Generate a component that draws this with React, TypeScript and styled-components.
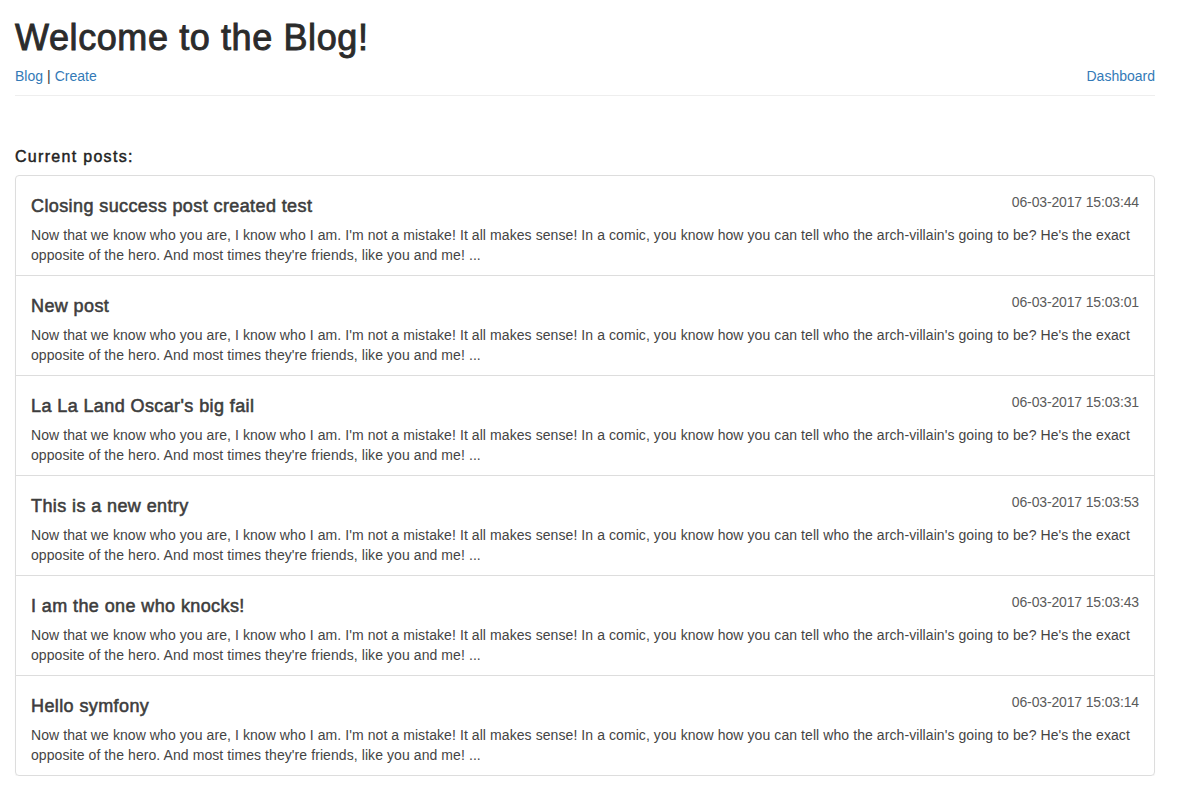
import React from "react";
import styled, { createGlobalStyle } from "styled-components";

const Global = createGlobalStyle`
  * { box-sizing: border-box; }
  html, body { margin: 0; padding: 0; background: #fff; }
  body {
    font-family: "Liberation Sans", Arial, Helvetica, sans-serif;
    font-size: 14px;
    line-height: 20px;
    color: #333;
  }
`;

const Page = styled.div`
  width: 1140px;
  margin-left: 15px;
`;

const Title = styled.h1`
  margin: 18px 0 8px;
  font-size: 36px;
  line-height: 40px;
  font-weight: 400;
  letter-spacing: 0.6px;
  color: #2b2b2b;
  -webkit-text-stroke: 0.9px #2b2b2b;
`;

const NavBar = styled.nav`
  display: flex;
  justify-content: space-between;
  align-items: center;
  height: 20px;
`;

const NavGroup = styled.div`
  display: flex;
  align-items: center;
`;

const NavLink = styled.a`
  color: #337ab7;
  text-decoration: none;
  &:hover { text-decoration: underline; }
`;

const Sep = styled.span`
  color: #333;
  margin: 0 4px;
`;

const Rule = styled.hr`
  margin: 9px 0 50px;
  border: 0;
  border-top: 1px solid #eee;
  height: 0;
`;

const SectionLabel = styled.h4`
  margin: 0 0 7px;
  font-size: 16px;
  line-height: 22px;
  font-weight: 400;
  letter-spacing: 1.3px;
  color: #222;
  -webkit-text-stroke: 0.45px #222;
`;

const List = styled.div`
  display: flex;
  flex-direction: column;
  border-radius: 4px;
  box-shadow: 0 1px 1px rgba(0, 0, 0, 0.05);
`;

const Item = styled.a`
  display: block;
  padding: 10px 15px;
  border: 1px solid #ddd;
  margin-bottom: -1px;
  color: #555;
  text-decoration: none;
  background: #fff;
  &:first-child { border-top-left-radius: 4px; border-top-right-radius: 4px; }
  &:last-child { margin-bottom: 0; border-bottom-left-radius: 4px; border-bottom-right-radius: 4px; }
  &:hover { background: #f5f5f5; }
`;

const ItemHead = styled.div`
  display: flex;
  justify-content: space-between;
  align-items: flex-start;
`;

const ItemTitle = styled.h4`
  margin: 10px 0 9px;
  font-size: 18px;
  line-height: 20px;
  font-weight: 400;
  letter-spacing: 0.4px;
  color: #3d3d3d;
  -webkit-text-stroke: 0.55px #3d3d3d;
`;

const ItemDate = styled.span`
  margin-top: 6px;
  font-size: 14px;
  line-height: 20px;
  color: #5a5a5a;
  letter-spacing: -0.15px;
`;

const ItemText = styled.p`
  margin: 0;
  font-size: 14px;
  line-height: 20px;
  color: #444;
  letter-spacing: 0.08px;
`;

const body =
  "Now that we know who you are, I know who I am. I'm not a mistake! It all makes sense! In a comic, you know how you can tell who the arch-villain's going to be? He's the exact opposite of the hero. And most times they're friends, like you and me! ...";

const posts = [
  { title: "Closing success post created test", date: "06-03-2017 15:03:44" },
  { title: "New post", date: "06-03-2017 15:03:01" },
  { title: "La La Land Oscar's big fail", date: "06-03-2017 15:03:31" },
  { title: "This is a new entry", date: "06-03-2017 15:03:53" },
  { title: "I am the one who knocks!", date: "06-03-2017 15:03:43" },
  { title: "Hello symfony", date: "06-03-2017 15:03:14" },
];

export default function App() {
  return (
    <>
      <Global />
      <Page>
        <Title>Welcome to the Blog!</Title>
        <NavBar>
          <NavGroup>
            <NavLink href="#">Blog</NavLink>
            <Sep>|</Sep>
            <NavLink href="#">Create</NavLink>
          </NavGroup>
          <NavLink href="#">Dashboard</NavLink>
        </NavBar>
        <Rule />
        <SectionLabel>Current posts:</SectionLabel>
        <List>
          {posts.map((p) => (
            <Item href="#" key={p.title}>
              <ItemHead>
                <ItemTitle>{p.title}</ItemTitle>
                <ItemDate>{p.date}</ItemDate>
              </ItemHead>
              <ItemText>{body}</ItemText>
            </Item>
          ))}
        </List>
      </Page>
    </>
  );
}
